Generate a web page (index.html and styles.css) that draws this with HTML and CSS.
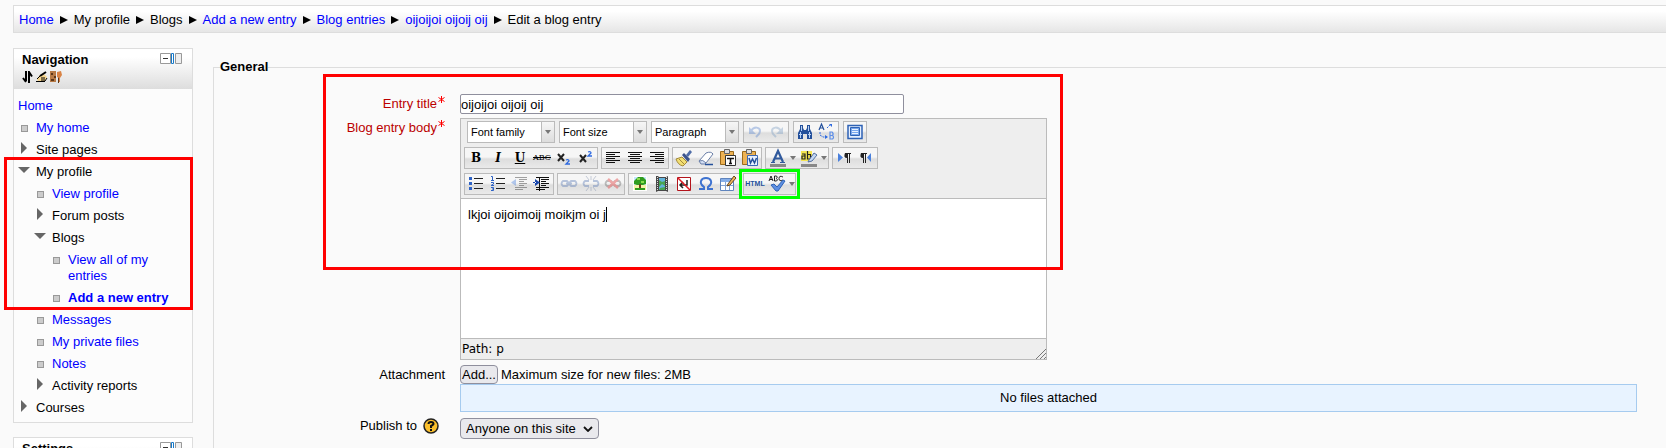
FILE: index.html
```html
<!DOCTYPE html>
<html lang="en">
<head>
<meta charset="utf-8">
<title>Edit a blog entry</title>
<link rel="stylesheet" href="styles.css">
</head>
<body>
<nav class="breadcrumb" aria-label="Breadcrumb">
  <a href="#">Home</a><i class="sep"></i><span>My profile</span><i class="sep"></i><span>Blogs</span><i class="sep"></i><a href="#">Add a new entry</a><i class="sep"></i><a href="#">Blog entries</a><i class="sep"></i><a href="#">oijoijoi oijoij oij</a><i class="sep"></i><span>Edit a blog entry</span>
</nav>

<div class="page">
  <aside class="sidebar">
    <section class="block">
      <header class="block-head">
        <div class="block-title">
          <h2>Navigation</h2>
          <svg class="dock" width="22" height="11" viewBox="0 0 22 11"><path fill="#fff" stroke="#999" d="M.5.5h10v10H.5z"/><path stroke="#333" d="M3 5.5h5"/><path fill="#fff" stroke="#1679c9" d="M11.5.5h2v10h-2z"/><path fill="#eee" stroke="#999" d="M15.5.5h6v10h-6z"/></svg>
        </div>
        <div class="block-tools">
          <svg width="12" height="12" viewBox="0 0 12 12" fill="none" stroke="#000" stroke-width="2"><path d="M4 0v10M1 7l3 4M7 12V1l3 4.500"/></svg>
          <svg width="12" height="12" viewBox="0 0 12 12"><path fill="#f6d58e" d="M1 8l3-4 4-1 3 3-2 4H2z"/><path fill="none" stroke="#000" d="M0 10.500h9M1 8l3-3M5 7h4M5 9h4M9 10l2-3"/><path stroke="#000" stroke-width="2" d="M4 5l6-4"/></svg>
          <svg width="12" height="12" viewBox="0 0 12 12"><path fill="#b87a45" d="M0 0h6v11H0z"/><path fill="#5c3719" d="M1 2h2v2H1zM4 5h2v2H4zM1 8h3v2H1zM8 5h1v7H8z"/><path fill="#d98345" d="M7 1l4-1 1 4-2 3v4H9V7L7 6z"/></svg>
        </div>
      </header>
      <ul class="tree">
        <li class="root"><a href="#">Home</a></li>
        <li class="leaf"><a href="#">My home</a></li>
        <li class="closed"><span>Site pages</span></li>
        <li class="open"><span>My profile</span></li>
        <li class="leaf l2"><a href="#">View profile</a></li>
        <li class="closed l2"><span>Forum posts</span></li>
        <li class="open l2"><span>Blogs</span></li>
        <li class="leaf l3"><a href="#">View all of my entries</a></li>
        <li class="leaf l3"><a href="#"><b>Add a new entry</b></a></li>
        <li class="leaf l2"><a href="#">Messages</a></li>
        <li class="leaf l2"><a href="#">My private files</a></li>
        <li class="leaf l2"><a href="#">Notes</a></li>
        <li class="closed l2"><span>Activity reports</span></li>
        <li class="closed"><span>Courses</span></li>
      </ul>
    </section>
    <section class="block">
      <header class="block-head">
        <div class="block-title">
          <h2>Settings</h2>
          <svg class="dock" width="22" height="11" viewBox="0 0 22 11"><path fill="#fff" stroke="#999" d="M.5.5h10v10H.5z"/><path stroke="#333" d="M3 5.5h5"/><path fill="#fff" stroke="#1679c9" d="M11.5.5h2v10h-2z"/><path fill="#eee" stroke="#999" d="M15.5.5h6v10h-6z"/></svg>
        </div>
      </header>
    </section>
  </aside>

  <form class="main">
    <fieldset class="general">
      <legend>General</legend>
      <div class="fields">
        <label class="label required" for="title">Entry title<svg class="star" width="7" height="7" viewBox="0 0 7 7"><path stroke="#f00" fill="none" d="M3.500 0v7M.5 1.500l6 4M6.500 1.500l-6 4"/></svg></label>
        <input class="title" id="title" type="text" value="oijoijoi oijoij oij">

        <label class="label required" for="body">Blog entry body<svg class="star" width="7" height="7" viewBox="0 0 7 7"><path stroke="#f00" fill="none" d="M3.500 0v7M.5 1.500l6 4M6.500 1.500l-6 4"/></svg></label>
        <div class="editor">
          <div class="toolbar">
            <div class="bar lists">
              <span class="list"><select aria-label="Font family"><option>Font family</option></select><i></i></span>
              <span class="list"><select aria-label="Font size"><option>Font size</option></select><i></i></span>
              <span class="list"><select aria-label="Format"><option>Paragraph</option></select><i></i></span>
              <div class="group">
                <button type="button" aria-label="Undo" disabled><svg viewBox="0 0 20 20"><path fill="none" stroke="#5a86cf" stroke-width="2" d="M6 9c3-5 9-4 9 0 0 3-2 4-4 6"/><path fill="#5a86cf" d="M4 5v7h7z"/></svg></button>
                <button type="button" aria-label="Redo" disabled><svg viewBox="0 0 20 20"><path fill="none" stroke="#7d9fc4" stroke-width="2" d="M14 9c-3-5-9-4-9 0 0 3 2 4 4 6"/><path fill="#7d9fc4" d="M16 5v7H9z"/></svg></button>
              </div>
              <div class="group">
                <button type="button" aria-label="Find"><svg viewBox="0 0 20 20"><path fill="#24509b" d="M5 3h3v3l1 2h2l1-2V3h3v4l2 4v6h-5v-5H8v5H3v-6l2-4z"/><path stroke="#b9d2f6" fill="none" d="M6.500 4v5M13.500 4v5M4 12.500h3M13 12.500h3M5.500 10v6M14.500 10v6"/></svg></button>
                <button type="button" aria-label="Replace"><svg viewBox="0 0 20 20"><path stroke="#24509b" fill="none" stroke-width="1.200" d="M2 8l2.500-6L7 8M3 6h3"/><path stroke="#5f8fe8" fill="none" stroke-width="1.200" d="M13 10v7h2.500q2-2 0-3.500H13h2.500q1.500-2-.5-3.500z"/><path stroke="#2e6ae0" fill="none" stroke-dasharray="2 1" d="M3 10v3l3 2h4M10 6l4-4"/><path fill="#2e6ae0" d="M12 2h3v3zM8 13l3 2-3 2z"/></svg></button>
              </div>
              <div class="group">
                <button type="button" aria-label="Full screen"><svg viewBox="0 0 20 20"><path fill="#e4efff" stroke="#2e62b5" stroke-width="1.500" d="M3 3.500h14v13H3z"/><path fill="#78a6ed" stroke="#2e62b5" d="M5.500 5.500h9v8h-9z"/><path stroke="#e8f2ff" d="M7 7.500h6M7 9.500h6M7 11.500h6"/></svg></button>
              </div>
            </div>
            <div class="bar">
              <div class="group">
                <button type="button" class="serif bold">B</button>
                <button type="button" class="serif bold italic">I</button>
                <button type="button" class="serif bold under">U</button>
                <button type="button" class="serif strike">ABC</button>
                <button type="button" aria-label="Subscript"><svg viewBox="0 0 20 20"><path stroke="#222" stroke-width="2" fill="none" d="M4 6l6 7M10 6l-6 7"/><path stroke="#2e6ae0" fill="none" stroke-width="1.300" d="M12 12q3-1 3 1l-3 3h4"/></svg></button>
                <button type="button" aria-label="Superscript"><svg viewBox="0 0 20 20"><path stroke="#222" stroke-width="2" fill="none" d="M4 7l6 7M10 7l-6 7"/><path stroke="#2e6ae0" fill="none" stroke-width="1.300" d="M12 4q3-1 3 1l-3 3h4"/></svg></button>
              </div>
              <div class="group">
                <button type="button" aria-label="Align left"><svg viewBox="0 0 20 20"><path stroke="#111" d="M3 4.500h14M3 6.500h9M3 8.500h14M3 10.500h9M3 12.500h14M3 14.500h9"/></svg></button>
                <button type="button" aria-label="Align center"><svg viewBox="0 0 20 20"><path stroke="#111" d="M3 4.500h14M5 6.500h10M3 8.500h14M5 10.500h10M3 12.500h14M5 14.500h10"/></svg></button>
                <button type="button" aria-label="Align right"><svg viewBox="0 0 20 20"><path stroke="#111" d="M3 4.500h14M8 6.500h9M3 8.500h14M8 10.500h9M3 12.500h14M8 14.500h9"/></svg></button>
              </div>
              <div class="group">
                <button type="button" aria-label="Clean up code"><svg viewBox="0 0 20 20"><path fill="#4f6da8" d="M12 7l4-5 2 2-4 5z"/><path fill="#f2df73" stroke="#a3893a" d="M2 11l6-2 5 5-4 4q-5-1-7-7z"/><path fill="#3c548c" d="M8 7l2-2 6 6-2 3z"/><path stroke="#a3893a" d="M5 11l5 5"/></svg></button>
                <button type="button" aria-label="Remove formatting"><svg viewBox="0 0 20 20"><path fill="#fff" stroke="#6a7fa8" d="M3 13l7-8q5-2 7 1l-7 9H5z"/><path fill="#d2def3" stroke="#6a7fa8" d="M3 13q4-2 7 2l-1 1H5z"/><path stroke="#24509b" stroke-width="1.500" d="M9 16.500h8"/></svg></button>
                <button type="button" aria-label="Paste as plain text"><svg viewBox="0 0 20 20"><path fill="#edb253" stroke="#9b6a1b" d="M2.500 3.500h13v13h-13z"/><path fill="#ddd" stroke="#666" d="M6.500 1.500h5v4h-5z"/><path fill="#fff" stroke="#333" d="M7.500 7.500h10v10h-10z"/><path stroke="#111" stroke-width="1.500" fill="none" d="M9 10.500h7M12.500 10v6M11 15.500h3"/></svg></button>
                <button type="button" aria-label="Paste from Word"><svg viewBox="0 0 20 20"><path fill="#edb253" stroke="#9b6a1b" d="M2.500 3.500h13v13h-13z"/><path fill="#ddd" stroke="#666" d="M6.500 1.500h5v4h-5z"/><path fill="#e8f1ff" stroke="#3c68b4" d="M7.500 7.500h10v10h-10z"/><path stroke="#24509b" stroke-width="1.500" fill="none" d="M9 10l1.500 5 2-4 2 4 2-5"/></svg></button>
              </div>
              <div class="group">
                <button type="button" class="wide" aria-label="Text color"><svg viewBox="0 0 20 20"><path stroke="#315a9d" stroke-width="2.200" fill="none" d="M5 14l5-11 5 11M7 10.500h6"/><path stroke="#315a9d" d="M3 14.500h4M12 14.500h5"/><path fill="#888" d="M2 16h16v3H2z"/></svg><i></i></button>
                <button type="button" class="wide" aria-label="Highlight color"><svg viewBox="0 0 20 20"><path fill="#f5e652" d="M2 3h11v10H2z"/><path stroke="#222" stroke-width="1.200" fill="none" d="M3 6h3v5H3V8h3M8.500 3v8h3V6.500h-3"/><path fill="#c5d8f5" stroke="#536f9e" d="M10 12l5-7 3 2-5 6-4 1z"/><path fill="#888" d="M2 16h16v3H2z"/></svg><i></i></button>
              </div>
              <div class="group">
                <button type="button" aria-label="Left to right"><svg viewBox="0 0 20 20"><path fill="#4a80dc" d="M4 5v9l5-4.500z"/><path fill="#222" d="M11 5h6v1h-1v9h-1V6h-1v9h-1v-5q-4 0-2-5z"/></svg></button>
                <button type="button" aria-label="Right to left"><svg viewBox="0 0 20 20"><path fill="#4a80dc" d="M15 5v9l-4-4.500z"/><path fill="#222" d="M5 5h6v1h-1v9H9V6H8v9H7v-5q-4 0-2-5z"/></svg></button>
              </div>
            </div>
            <div class="bar">
              <div class="group">
                <button type="button" aria-label="Bulleted list"><svg viewBox="0 0 20 20"><path fill="#2e62c5" d="M3 3h3v3H3zM3 8h3v3H3zM3 13h3v3H3z"/><path stroke="#222" d="M8 4.500h9M8 9.500h9M8 14.500h9"/></svg></button>
                <button type="button" aria-label="Numbered list"><svg viewBox="0 0 20 20"><path stroke="#2e62c5" fill="none" d="M3 2.500h1.500v4M3 6.500h3M3 8.500h2.500v1.500L3 11.500h3M3 13.500h2.500v3H3M4 15h2"/><path stroke="#222" d="M8 4.500h9M8 9.500h9M8 14.500h9"/></svg></button>
                <button type="button" aria-label="Outdent" disabled><svg viewBox="0 0 20 20"><path stroke="#222" d="M5 3.500h12M9 5.500h8M9 7.500h5M9 9.500h8M9 11.500h5M5 13.500h12M5 15.500h8"/><path fill="#4a80dc" d="M6 5v7L1 8.500z"/></svg></button>
                <button type="button" aria-label="Indent"><svg viewBox="0 0 20 20"><path stroke="#111" d="M4 3.500h13M9 5.500h8M9 7.500h5M9 9.500h8M9 11.500h5M4 13.500h13M4 15.500h9M7.500 4v13"/><path fill="#1746ae" d="M3 5v7l5-3.500zM1 8h3v1H1z"/></svg></button>
              </div>
              <div class="group">
                <button type="button" aria-label="Link" disabled><svg viewBox="0 0 20 20"><path fill="none" stroke="#5879b5" stroke-width="1.800" d="M4 7h4q3 2.500 0 5H4q-3-2.500 0-5zM12 7h4q3 2.500 0 5h-4q-3-2.500 0-5zM7 9.500h6"/></svg></button>
                <button type="button" aria-label="Unlink" disabled><svg viewBox="0 0 20 20"><path fill="none" stroke="#5879b5" stroke-width="1.800" d="M8 7H4q-3 2.500 0 5h4M12 7h4q3 2.500 0 5h-4"/><path stroke="#7a8aa8" d="M10 2v4M5 2l3 4M15 2l-3 4M10 13v4M5 17l3-4M15 17l-3-4"/></svg></button>
                <button type="button" aria-label="Prevent automatic linking" disabled><svg viewBox="0 0 20 20"><path fill="none" stroke="#666" stroke-width="1.800" d="M4 7h4q3 2.500 0 5H4q-3-2.500 0-5zM12 7h4q3 2.500 0 5h-4q-3-2.500 0-5z"/><path stroke="#e03030" stroke-width="2.500" d="M5 5l10 9M15 5L5 14"/></svg></button>
              </div>
              <div class="group">
                <button type="button" aria-label="Image"><svg viewBox="0 0 20 20"><path fill="#fff" d="M3 2h14v15H3z"/><path fill="#c5e8ff" d="M4 3h12v8H4z"/><path fill="#f6f3a5" d="M4 11h12v5H4z"/><path fill="#2f9c1e" d="M4 7l4-4h5l3 3v4l-3 1H7l-3-1z"/><path fill="#8add4d" d="M7 4h3v2H7zM11 7h3v2h-3z"/><path fill="#6b431c" d="M9 10h2v5H9z"/><path fill="#2f9c1e" d="M5 14h10v2H5z"/></svg></button>
                <button type="button" aria-label="Media"><svg viewBox="0 0 20 20"><path fill="#484848" d="M4 2h2l1 1h7l2-1v16l-2-1H6l-2 1z"/><path fill="#62b4dc" d="M7 4h6v12H7z"/><path fill="#48a553" d="M7 6l3 2 3-1v5l-3-2-3 3zM8 14l5-1v3H7z"/><path stroke="#ddd" stroke-dasharray="1 1" d="M5.500 3v14M14.500 3v14"/></svg></button>
                <button type="button" aria-label="Nonbreaking space"><svg viewBox="0 0 20 20"><path fill="#fff" stroke="#b3141c" d="M3.500 3.500h13v13h-13z"/><path fill="none" stroke="#222" stroke-width="1.500" d="M13 6v5H7M9 8l-3 3 3 3"/><path stroke="#e01a22" stroke-width="1.500" d="M4 4l12 12"/></svg></button>
                <button type="button" aria-label="Special character"><svg viewBox="0 0 20 20"><path fill="none" stroke="#3e73d0" stroke-width="2" d="M3 15h5v-2q-4-3-3-6 1-3 5-3t5 3q1 3-3 6v2h5"/></svg></button>
                <button type="button" aria-label="Insert table"><svg viewBox="0 0 20 20"><path fill="#fff" stroke="#5f84bd" d="M2.500 4.500h13v12h-13z"/><path fill="#86aee8" d="M3 5h12v3H3z"/><path stroke="#86a5d4" d="M3 11.500h12M7.500 8v8M11.500 8v8"/><path fill="#f0b45a" stroke="#664722" d="M10 10l6-8 2 2-6 7-3 1z"/></svg></button>
              </div>
              <div class="group marked">
                <button type="button" class="html">HTML</button>
                <button type="button" class="wide" aria-label="Spellcheck"><svg viewBox="0 0 20 20"><path stroke="#222" fill="none" d="M2 7l2-5 2 5M3 5.500h3M7.500 2v5h2q2-1 0-2.500 1.500-1.500 0-2.500zM16 3q-4-2-4 1.500T16 6"/><path fill="#5e8fe2" stroke="#2e62b5" d="M4 11l3-1 3 3 6-7 2 1-7 10H9z"/></svg><i></i></button>
              </div>
            </div>
          </div>
          <div class="content" id="body" contenteditable="true" role="textbox" aria-label="Blog entry body">lkjoi oijoimoij moikjm oi j<span class="caret"></span></div>
          <div class="status"><span>Path: p</span><svg width="11" height="11" viewBox="0 0 11 11"><path stroke="#777" d="M1 11L11 1M5 11l6-6M9 11l2-2"/></svg></div>
        </div>

        <label class="label" for="add">Attachment</label>
        <div class="attach">
          <div class="attach-line"><button class="add" id="add" type="button">Add...</button><span>Maximum size for new files: 2MB</span></div>
          <div class="files">No files attached</div>
        </div>

        <div class="label publish"><label for="publish">Publish to</label><svg width="16" height="16" viewBox="0 0 16 16"><circle cx="8" cy="8" r="7" fill="#fbc02c" stroke="#222" stroke-width="1.500"/><path fill="none" stroke="#111" stroke-width="2" d="M5.500 6q0-2 2.500-2t2.500 2Q10 7 8 8v2"/><path fill="#111" d="M7 11h2v2H7z"/></svg></div>
        <span class="picker"><select id="publish"><option>Anyone on this site</option></select><svg width="10" height="6" viewBox="0 0 10 6"><path fill="none" stroke="#111" stroke-width="1.800" d="M1 1l4 4 4-4"/></svg></span>
      </div>
    </fieldset>
  </form>
</div>

<div class="mark mark-nav"></div>
<div class="mark mark-entry"></div>
</body>
</html>
```
FILE: styles.css
```css
* { box-sizing: border-box; }
html { height: 100%; overflow: hidden; }
body {
  position: relative;
  height: 100%;
  margin: 0;
  padding: 5px 0 0 13px;
  overflow: hidden;
  background: #fafafa;
  color: #000;
  font: 13px/16px "Liberation Sans", Arial, sans-serif;
}
a { color: #00f; text-decoration: none; }
button, input, select { font: inherit; color: inherit; margin: 0; }
svg { display: block; flex: none; }

.breadcrumb {
  display: flex;
  align-items: center;
  height: 28px;
  padding: 2px 0 0 5px;
  border: 1px solid #ddd;
  border-right: 0;
  background: linear-gradient(#fff 20%, #e6e6e6);
}
.sep {
  margin: 0 6px;
  border: solid transparent;
  border-width: 4px 0 4px 8px;
  border-left-color: #000;
}

.page { display: flex; align-items: flex-start; gap: 20px; padding-top: 15px; }
.sidebar { flex: none; width: 180px; }
.block { margin-bottom: 14px; border: 1px solid #ddd; background: #fcfcfc; }
.block-head {
  height: 40px;
  padding: 3px 10px 0 8px;
  background: linear-gradient(#fff 20%, #ddd);
}
.block-title { display: flex; justify-content: space-between; }
.block-title h2 { margin: 0; font-size: 13px; line-height: 16px; }
.dock { margin-top: 1px; }
.block-tools { display: flex; gap: 2px; padding-top: 3px; }

.tree {
  display: grid;
  gap: 6px;
  margin: 0;
  padding: 9px 20px 6px 22px;
  list-style: none;
}
.tree li { position: relative; }
.tree .root { margin-left: -18px; }
.tree .l2 { margin-left: 16px; }
.tree .l3 { margin-left: 32px; }
.tree li::before { position: absolute; }
.leaf::before {
  content: "";
  top: 5px;
  left: -15px;
  width: 5px;
  height: 5px;
  border: 1px solid #999;
  background: #ccc;
}
.closed::before {
  content: "";
  top: 0;
  left: -15px;
  border: solid transparent;
  border-width: 6px 0 6px 6px;
  border-left-color: #666;
}
.open::before {
  content: "";
  top: 3px;
  left: -18px;
  border: solid transparent;
  border-width: 6px 6px 0;
  border-top-color: #666;
}

.main { flex: 1; min-width: 0; padding-top: 11px; }
.general {
  min-width: 0;
  min-height: 460px;
  margin: 0;
  padding: 19px 29px 0 0;
  border: 1px solid #ddd;
  border-right: 0;
}
.general legend { margin-left: 6px; padding: 0; font-weight: bold; }
.fields {
  display: grid;
  grid-template-columns: 231px minmax(0, 1fr);
  column-gap: 15px;
  align-items: start;
}
.label { display: flex; justify-content: flex-end; padding-top: 2px; }
.required { color: #b00; }
.star { margin-left: 1px; }
.title {
  width: 444px;
  height: 20px;
  margin-bottom: 4px;
  padding: 0;
  border: 1px solid #8f8f9d;
  border-radius: 2px;
  background: #fff;
}

.editor { width: 587px; margin-bottom: 5px; border: 1px solid #bbb; }
.toolbar {
  display: grid;
  gap: 4px;
  padding: 2px 0 3px 3px;
  border-bottom: 1px solid #bbb;
  background: #eee;
}
.bar { display: flex; gap: 3px; }
.lists { gap: 4px; padding-left: 3px; }
.group {
  display: flex;
  height: 22px;
  border: 1px solid #bbb;
  background: linear-gradient(#f6f6f6 45%, #ddd 55%, #eaeaea);
}
.group button {
  display: flex;
  align-items: center;
  justify-content: center;
  width: 22px;
  height: 20px;
  padding: 0;
  border: 0;
  background: none;
  line-height: 20px;
}
.group button svg { width: 20px; height: 20px; }
.group button:disabled svg { opacity: .4; }
.group .wide { width: 31px; }
.group.marked .wide { width: 29px; }
.wide i, .list i::after {
  content: "";
  border: solid transparent;
  border-width: 4px 3px 0;
  border-top-color: #777;
}
.wide i { margin-left: 2px; }
.group .serif { font-family: "DejaVu Serif", serif; font-size: 12px; }
.group .bold { font-weight: bold; }
.group .italic { font-style: italic; }
.group .under { text-decoration: underline; }
.group .strike { font-size: 8px; text-decoration: line-through; }
.group .html { color: #24509b; font-size: 7px; font-weight: bold; }
.marked { outline: 3px solid #0f0; outline-offset: 1px; }

.list {
  display: flex;
  width: 88px;
  height: 22px;
  border: 1px solid #bbb;
  background: #fff;
}
.list select {
  flex: 1;
  min-width: 0;
  padding: 0 0 0 3px;
  border: 0;
  background: #fff;
  appearance: none;
  font-size: 11px;
}
.list i {
  display: flex;
  align-items: center;
  justify-content: center;
  width: 13px;
  border-left: 1px solid #bbb;
  background: linear-gradient(#f6f6f6, #ddd);
}

.content {
  height: 139px;
  padding: 8px 7px;
  background: #fff;
  outline: 0;
}
.caret { border-right: 1px solid #000; }
.status {
  display: flex;
  justify-content: space-between;
  align-items: flex-end;
  height: 21px;
  padding-left: 1px;
  border-top: 1px solid #bbb;
  background: #eee;
  font: 12px/20px "DejaVu Sans", Verdana, sans-serif;
}

.attach-line { display: flex; align-items: center; gap: 3px; }
.add {
  height: 19px;
  padding: 0 1px;
  border: 1px solid #8f8f9d;
  border-radius: 4px;
  background: #e9e9ed;
}
.files {
  margin-bottom: 6px;
  padding: 5px 0;
  border: 1px solid #a6cbef;
  background: #e8f3ff;
  text-align: center;
}
.publish { gap: 6px; padding: 0 6px 0 0; }
.picker {
  display: grid;
  justify-self: start;
  align-items: center;
}
.picker select, .picker svg { grid-area: 1 / 1; }
.picker select {
  height: 21px;
  padding: 0 22px 0 5px;
  border: 1px solid #8f8f9d;
  border-radius: 4px;
  background: #e9e9ed;
  appearance: none;
}
.picker svg { justify-self: end; margin-right: 6px; pointer-events: none; }

.mark {
  position: absolute;
  border: 3px solid #f00;
  pointer-events: none;
}
.mark-nav { left: 4px; top: 157px; width: 189px; height: 153px; }
.mark-entry { left: 323px; top: 74px; width: 740px; height: 196px; }
```
